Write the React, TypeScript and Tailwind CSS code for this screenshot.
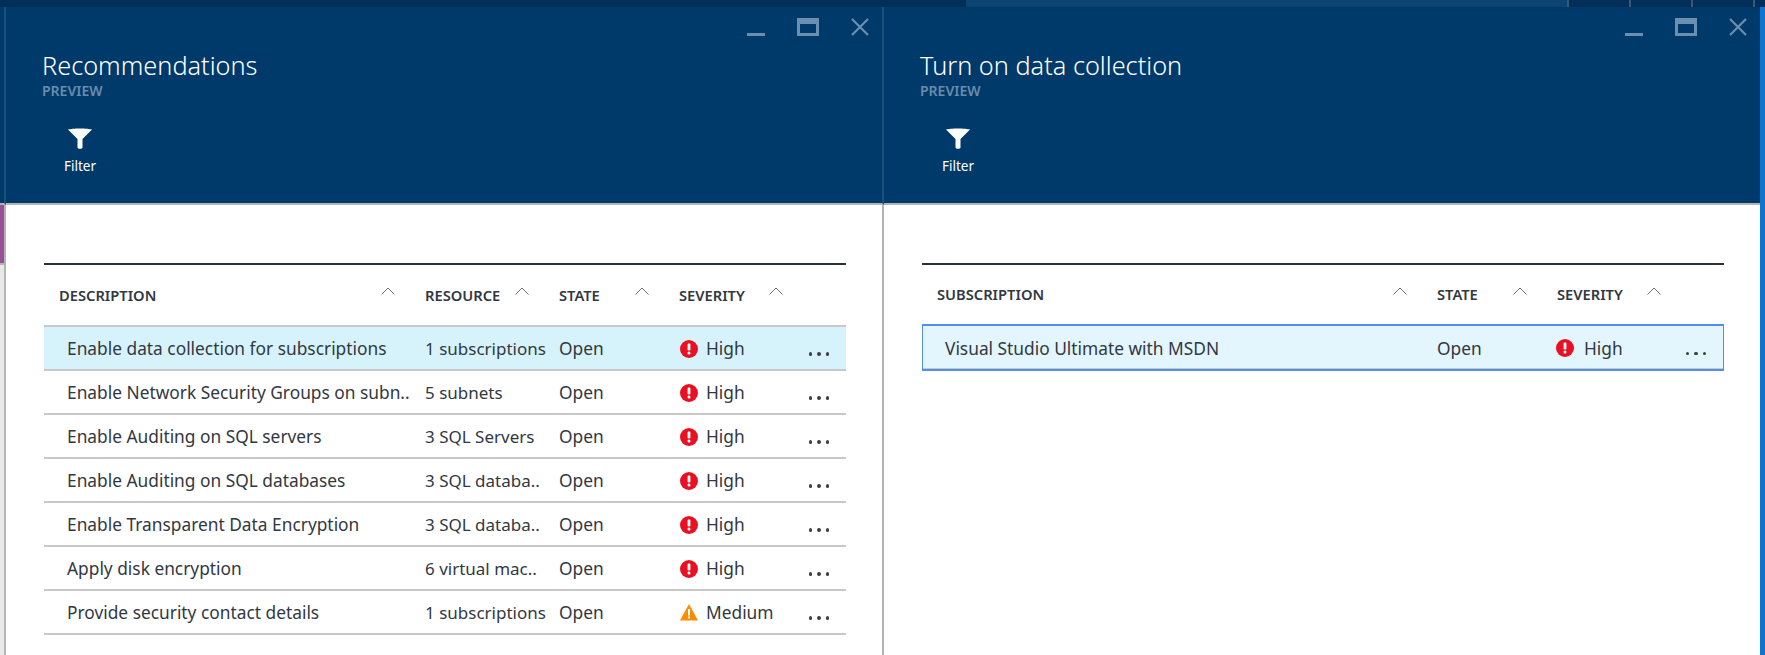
import type { ReactNode } from "react";

const rows = [
  { description: "Enable data collection for subscriptions", resource: "1 subscriptions", severity: "High", selected: true },
  { description: "Enable Network Security Groups on subn..", resource: "5 subnets", severity: "High" },
  { description: "Enable Auditing on SQL servers", resource: "3 SQL Servers", severity: "High" },
  { description: "Enable Auditing on SQL databases", resource: "3 SQL databa..", severity: "High" },
  { description: "Enable Transparent Data Encryption", resource: "3 SQL databa..", severity: "High" },
  { description: "Apply disk encryption", resource: "6 virtual mac..", severity: "High" },
  { description: "Provide security contact details", resource: "1 subscriptions", severity: "Medium" },
];

function WindowControls() {
  return (
    <div className="flex items-start justify-end pt-[11px] pr-[13px] h-[43px] text-[#6b8fae]">
      <div className="w-[18px] h-[18px] flex items-end">
        <div className="w-full h-[3px] bg-[#6b8fae]" />
      </div>
      <div className="ml-[32px] w-[22px] h-[18px] border-[3px] border-t-[6px] border-[#6b8fae]" />
      <svg className="ml-[32px]" width="18" height="18" viewBox="0 0 18 18">
        <path d="M1 1l16 16M17 1L1 17" stroke="currentColor" strokeWidth="2.2" fill="none" />
      </svg>
    </div>
  );
}

function PanelHeader({ title, divider }: { title: string; divider?: boolean }) {
  return (
    <div className={`h-[198px] bg-[#003a6b] border-b-2 border-b-[#b4b4b4] ${divider ? "border-r-2 border-r-[#1d4f7c]" : ""}`}>
      <WindowControls />
      <div className="pl-[36px]">
        <h1 className="text-[25.3px] leading-[30px] font-light text-white">{title}</h1>
        <p className="text-[14px] leading-[18px] font-semibold text-[#6a8cab] mt-[2px]">PREVIEW</p>
        <div className="w-[76px] mt-[28px] flex flex-col items-center">
          <svg width="24" height="21" viewBox="0 0 24 21" fill="white">
            <path d="M0 1.5C4 0 20 0 24 1.5L14.5 11V19.5C14.5 21.2 9.5 21.2 9.5 19.5V11Z" />
          </svg>
          <span className="text-[13.5px] leading-[18px] mt-[8px] text-white">Filter</span>
        </div>
      </div>
    </div>
  );
}

function Caret() {
  return (
    <svg className="mb-[8px]" width="14" height="8" viewBox="0 0 14 8">
      <path d="M0.5 7.5L7 1l6.5 6.5" stroke="#6b6f73" strokeWidth="1" fill="none" />
    </svg>
  );
}

function HeaderCell({ label, first, last }: { label: string; first?: boolean; last?: boolean }) {
  return (
    <div className={`flex items-center justify-between ${first ? "pl-[15px]" : ""} ${last ? "pr-[63px]" : "pr-[30px]"}`}>
      <span className="text-[14.7px] font-semibold text-[#32383f]">{label}</span>
      <Caret />
    </div>
  );
}

function SeverityIcon({ severity }: { severity: string }) {
  if (severity === "Medium") {
    return (
      <svg width="18" height="17" viewBox="0 0 18 17">
        <path d="M9 0L18 16.5H0Z" fill="#ff8c00" />
        <rect x="8" y="5" width="2" height="6.5" fill="white" />
        <rect x="8" y="12.5" width="2" height="2" fill="white" />
      </svg>
    );
  }
  return (
    <svg width="18" height="18" viewBox="0 0 18 18">
      <circle cx="9" cy="9" r="9" fill="#e81123" />
      <rect x="7.6" y="3.5" width="2.8" height="7" rx="1.2" fill="white" />
      <circle cx="9" cy="13" r="1.5" fill="white" />
    </svg>
  );
}

function Severity({ severity, wide }: { severity: string; wide?: boolean }) {
  return (
    <div className="flex items-center justify-between pr-[17px]">
      <span className={`flex items-center pl-[1px] ${wide ? "gap-[10px]" : "gap-[8px]"}`}>
        <SeverityIcon severity={severity} />
        {severity}
      </span>
      <span className="flex gap-[5px] pt-[10px]">
        <i className="w-[3.5px] h-[3.5px] rounded-full bg-[#3c4043]" />
        <i className="w-[3.5px] h-[3.5px] rounded-full bg-[#3c4043]" />
        <i className="w-[3.5px] h-[3.5px] rounded-full bg-[#3c4043]" />
      </span>
    </div>
  );
}

function Table({ children }: { children: ReactNode }) {
  return <div className="border-t-2 border-t-[#2b3036]">{children}</div>;
}

function RecommendationsPanel() {
  return (
    <section className="w-[878px] flex flex-col">
      <PanelHeader title="Recommendations" divider />
      <div className="flex-1 pt-[58px] pl-[38px] pr-[36px] border-r-2 border-r-[#b4b4b4]">
        <Table>
          <div className="grid grid-cols-[381px_134px_120px_1fr] h-[60px]">
            <HeaderCell label="DESCRIPTION" first />
            <HeaderCell label="RESOURCE" />
            <HeaderCell label="STATE" />
            <HeaderCell label="SEVERITY" last />
          </div>
          <div className="border-t-2 border-t-[#c8c8c8]">
            {rows.map((row) => (
              <div
                key={row.description}
                className={`grid grid-cols-[381px_134px_120px_1fr] h-[44px] pt-[2px] items-center border-b-2 border-b-[#c8c8c8] text-[17.33px] text-[#32383f] ${row.selected ? "bg-[#d6f3fc]" : ""}`}
              >
                <span className="pl-[23px] whitespace-nowrap">{row.description}</span>
                <span className="whitespace-nowrap text-[17px]">{row.resource}</span>
                <span>Open</span>
                <Severity severity={row.severity} />
              </div>
            ))}
          </div>
        </Table>
      </div>
    </section>
  );
}

function DataCollectionPanel() {
  return (
    <section className="flex-1 flex flex-col">
      <PanelHeader title="Turn on data collection" />
      <div className="flex-1 pt-[58px] pl-[38px] pr-[36px]">
        <Table>
          <div className="grid grid-cols-[515px_120px_1fr] h-[59px]">
            <HeaderCell label="SUBSCRIPTION" first />
            <HeaderCell label="STATE" />
            <HeaderCell label="SEVERITY" last />
          </div>
          <div className="grid grid-cols-[514px_118px_1fr] h-[47px] pt-[2px] items-center border border-t-2 border-b-2 border-[#4f8fe8] bg-[#e3f5fd] text-[17.33px] text-[#32383f] shadow-[inset_0_-1px_0_#c8c8c8]">
            <span className="pl-[22px]">Visual Studio Ultimate with MSDN</span>
            <span>Open</span>
            <Severity severity="High" wide />
          </div>
        </Table>
      </div>
    </section>
  );
}

export default function App() {
  return (
    <div className="w-[1765px] h-[655px] overflow-hidden flex flex-col bg-white font-['Noto_Sans','Open_Sans',sans-serif]">
      {/* Top bar */}
      <div className="h-[7px] flex bg-[#022f5a]">
        <div className="w-[966px]" />
        <div className="w-[601px] bg-[#0e4472]" />
        <div className="w-[2px] bg-[#3a5673]" />
        <div className="w-[60px]" />
        <div className="w-[2px] bg-[#3a5673]" />
        <div className="w-[60px]" />
        <div className="w-[2px] bg-[#3a5673]" />
        <div className="w-[60px]" />
        <div className="w-[2px] bg-[#3a5673]" />
      </div>

      <div className="flex flex-1">
        {/* Edge of the blade behind */}
        <div className="w-[6px] flex flex-col">
          <div className="h-[198px] bg-[#003a6b] border-r-2 border-r-[#1d4f7c] border-b-2 border-b-[#b4b4b4]" />
          <div className="flex-1 flex flex-col border-r-2 border-r-[#b4b4b4] bg-[#e8e8e8]">
            <div className="h-[58px] bg-[#9b4f96] border-b-2 border-b-[#b4b4b4] box-content" />
          </div>
        </div>
        <RecommendationsPanel />
        <DataCollectionPanel />
        <div className="w-[5px] bg-[#0f74cf]" />
      </div>
    </div>
  );
}
